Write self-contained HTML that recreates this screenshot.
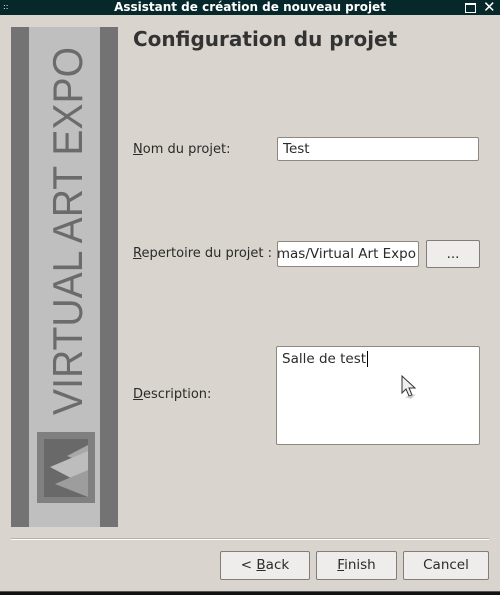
<!DOCTYPE html>
<html><head><meta charset="utf-8"><style>
*{margin:0;padding:0;box-sizing:border-box}
body{width:500px;height:595px;background:#d9d5ce;position:relative;overflow:hidden;font-family:"DejaVu Sans","Liberation Sans",sans-serif;font-size:13px;color:#2a2a2a}
.abs{position:absolute}
.title{left:0;top:0;width:500px;height:15px;background:#06282a;color:#fff;font-weight:bold;font-size:12px;text-align:center;line-height:14px}
.inp{background:#fff;border:1px solid #8d877e;border-radius:2px;line-height:22px;padding-left:5px;white-space:nowrap;overflow:hidden;font-size:13.5px}
.btn{background:#eeedeb;border:1px solid #827d76;border-radius:2px;text-align:center;line-height:26px;font-size:13.5px}
u{text-decoration:underline}
</style></head><body>
<div class="abs title">Assistant de création de nouveau projet</div>
<div class="abs" style="left:3px;top:4px;width:8px;height:6px;color:#fff;font-size:8px;line-height:6px">::</div>
<div class="abs" style="left:465px;top:3px;width:11px;height:10px;border:1.5px solid #fff;border-top-width:2px"></div>
<div class="abs" style="left:483px;top:0px;color:#fff;font-size:15px;line-height:15px">✕</div>
<svg class="abs" style="left:11px;top:27px" width="107" height="500">
<rect x="0" y="0" width="107" height="500" fill="#737373"/>
<rect x="18" y="0" width="71" height="500" fill="#bfbfbf"/>
<text transform="rotate(-90 71 388)" x="71" y="388" font-family="Liberation Sans" font-size="42" fill="#6b6b6b" textLength="368" lengthAdjust="spacingAndGlyphs">VIRTUAL ART EXPO</text>
<rect x="26" y="405" width="58" height="71" fill="#808080"/>
<rect x="33" y="412" width="44" height="58" fill="#696969"/>
<polygon points="77,418 56,429 77,437" fill="#a8a8a8"/>
<polygon points="77,424 39,440 77,460" fill="#bdbdbd"/>
<polygon points="77,443 44,457 77,470" fill="#9d9d9d"/>
</svg>
<div class="abs" style="left:133px;top:27px;font-size:20px;font-weight:bold;color:#333">Configuration du projet</div>
<div class="abs" style="left:133px;top:142px"><u>N</u>om du projet:</div>
<div class="abs inp" style="left:277px;top:137px;width:202px;height:24px">Test</div>
<div class="abs" style="left:133px;top:246px"><u>R</u>epertoire du projet :</div>
<div class="abs inp" style="left:277px;top:241px;width:142px;height:26px;line-height:24px;padding-left:0;direction:rtl;text-align:right;padding-right:2px">omas/Virtual Art Expo</div>
<div class="abs btn" style="left:426px;top:240px;width:54px;height:28px">...</div>
<div class="abs" style="left:133px;top:387px"><u>D</u>escription:</div>
<div class="abs inp" style="left:276px;top:346px;width:204px;height:99px;line-height:22px;padding-top:1px">Salle de test<span style="border-left:1px solid #000;margin-left:1px"></span></div>
<svg class="abs" style="left:401px;top:375px" width="20" height="28"><polygon points="1,1 1,18 5,14 8,21 11,20 8,13 14,13" fill="#eee" stroke="#333"/><polygon points="4,22 10,24 15,19" fill="#999" opacity=".5"/></svg>
<div class="abs" style="left:11px;top:538px;width:478px;height:2px;border-top:1px solid #b4b0aa;border-bottom:1px solid #fff"></div>
<div class="abs btn" style="left:220px;top:551px;width:90px;height:29px">&lt; <u>B</u>ack</div>
<div class="abs btn" style="left:316px;top:551px;width:81px;height:29px"><u>F</u>inish</div>
<div class="abs btn" style="left:403px;top:551px;width:86px;height:29px">Cancel</div>
<div class="abs" style="left:0;top:591px;width:500px;height:4px;background:#111;border-top:1px solid #555"></div>
</body></html>
